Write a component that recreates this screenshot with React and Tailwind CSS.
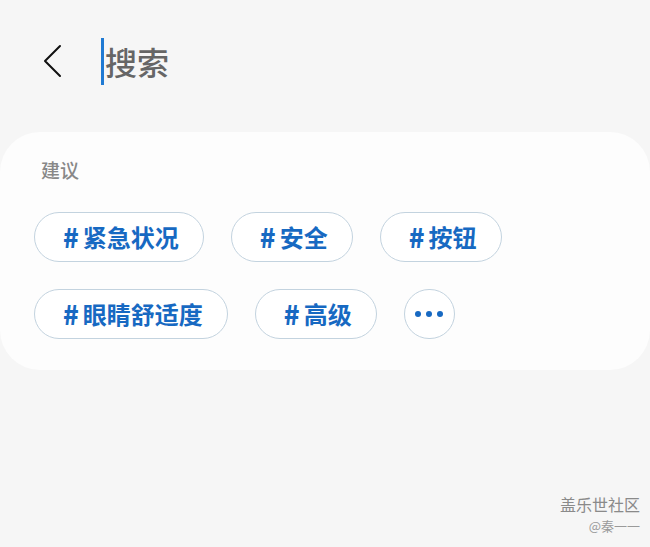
import React from "react";

const chipsRow1 = ["紧急状况", "安全", "按钮"];
const chipsRow2 = ["眼睛舒适度", "高级"];

const Chip = ({ label }) => (
  <div className="h-[50px] flex items-center rounded-full border border-[#c3d3df] bg-white pl-[28px] pr-[24px]">
    <span className="text-[26px] font-black text-[#1769c2] leading-none mr-[4px]">#</span>
    <span className="text-[24px] font-bold text-[#1769c2] leading-none">{label}</span>
  </div>
);

export default function App() {
  return (
    <div
      className="relative w-[650px] h-[547px] bg-[#f6f6f6] overflow-hidden"
      style={{ fontFamily: '"Noto Sans CJK SC", "Noto Sans", sans-serif' }}
    >
      {/* header */}
      <div className="h-[124px] flex items-center pl-[40px] pb-[2px]">
        <svg width="24" height="34" viewBox="0 0 24 34" className="shrink-0">
          <path d="M20 2 L5 17 L20 32" fill="none" stroke="#111" strokeWidth="2" strokeLinecap="round" strokeLinejoin="round" />
        </svg>
        <div className="ml-[37px] w-[3px] h-[47px] bg-[#1f7ad3]" />
        <span className="text-[32px] font-medium text-[#666] leading-none ml-[1px]">搜索</span>
      </div>

      {/* suggestions card */}
      <div className="mt-2 bg-[#fdfdfd] rounded-[40px] px-[34px] pt-[24px] pb-[31px]">
        <div className="ml-[7px] text-[19px] font-medium leading-[28px] text-[#888]">建议</div>
        <div className="mt-[28px] flex gap-[27px]">
          {chipsRow1.map((c) => (
            <Chip key={c} label={c} />
          ))}
        </div>
        <div className="mt-[27px] flex gap-[27px]">
          {chipsRow2.map((c) => (
            <Chip key={c} label={c} />
          ))}
          <div className="w-[51px] h-[50px] rounded-full border border-[#c3d3df] bg-white flex items-center justify-center gap-[5px]">
            <span className="w-[6px] h-[6px] rounded-full bg-[#1769c2]" />
            <span className="w-[6px] h-[6px] rounded-full bg-[#1769c2]" />
            <span className="w-[6px] h-[6px] rounded-full bg-[#1769c2]" />
          </div>
        </div>
      </div>

      {/* watermark */}
      <div className="absolute right-[10px] bottom-[12px] flex flex-col items-end">
        <span className="text-[16px] leading-[23px] text-[#8a8a8a]">盖乐世社区</span>
        <span className="text-[13px] leading-[19px] text-[#9a9a9a]">@秦一一</span>
      </div>
    </div>
  );
}
